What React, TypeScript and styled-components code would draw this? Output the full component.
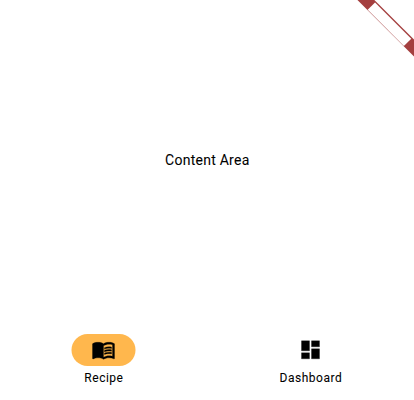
import React from "react";
import styled, { createGlobalStyle } from "styled-components";
import { MdDashboard, MdMenuBook } from "react-icons/md";

const GlobalStyle = createGlobalStyle`
  body {
    margin: 0;
    background: #fff;
  }
`;

const Screen = styled.div`
  position: relative;
  display: flex;
  flex-direction: column;
  width: 414px;
  height: 400px;
  overflow: hidden;
  background: #fff;
  color: #000;
  font-family: Roboto, sans-serif;
`;

const Content = styled.main`
  flex: 1;
  display: flex;
  align-items: center;
  justify-content: center;
  font-size: 14px;
  line-height: 20px;
  letter-spacing: 0.25px;
  -webkit-text-stroke: 0.06px #000;
  transform: translateX(0.3px);
`;

const NavigationBar = styled.nav`
  display: flex;
  height: 80px;
`;

const Destination = styled.button`
  flex: 1;
  display: flex;
  flex-direction: column;
  align-items: center;
  gap: 4px;
  padding: 14px 0 0;
  border: 0;
  background: transparent;
  color: inherit;
  font-family: inherit;
`;

const Indicator = styled.span<{ $selected?: boolean }>`
  display: flex;
  align-items: center;
  justify-content: center;
  width: 64px;
  height: 32px;
  border-radius: 16px;
  background: ${({ $selected }) => ($selected ? "#ffb74d" : "transparent")};
  transform: translateX(-0.5px);

  svg {
    width: 24px;
    height: 24px;
    transform: translateY(-0.2px);
  }

  path:not([fill="none"]) {
    stroke: currentColor;
    stroke-width: 0.3px;
  }
`;

const Label = styled.span`
  font-size: 12px;
  font-weight: 400;
  line-height: 16px;
  letter-spacing: 0.5px;
  -webkit-text-stroke: 0.06px #000;
  transform: translateX(0.4px);
`;

const CornerBanner = styled.svg`
  position: absolute;
  top: 0;
  right: 0;
`;

export default function App() {
  return (
    <Screen>
      <GlobalStyle />
      <Content>Content Area</Content>
      <NavigationBar>
        <Destination>
          <Indicator $selected>
            <MdMenuBook />
          </Indicator>
          <Label>Recipe</Label>
        </Destination>
        <Destination>
          <Indicator>
            <MdDashboard />
          </Indicator>
          <Label>Dashboard</Label>
        </Destination>
      </NavigationBar>
      <CornerBanner width="60" height="60" viewBox="0 0 60 60" aria-hidden="true">
        <g transform="translate(60 0) rotate(45)">
          <rect x="-40" y="28" width="80" height="12" fill="#a43f3f" />
          <rect x="-25.8" y="29.3" width="51.2" height="10.4" fill="#fff" />
        </g>
      </CornerBanner>
    </Screen>
  );
}
